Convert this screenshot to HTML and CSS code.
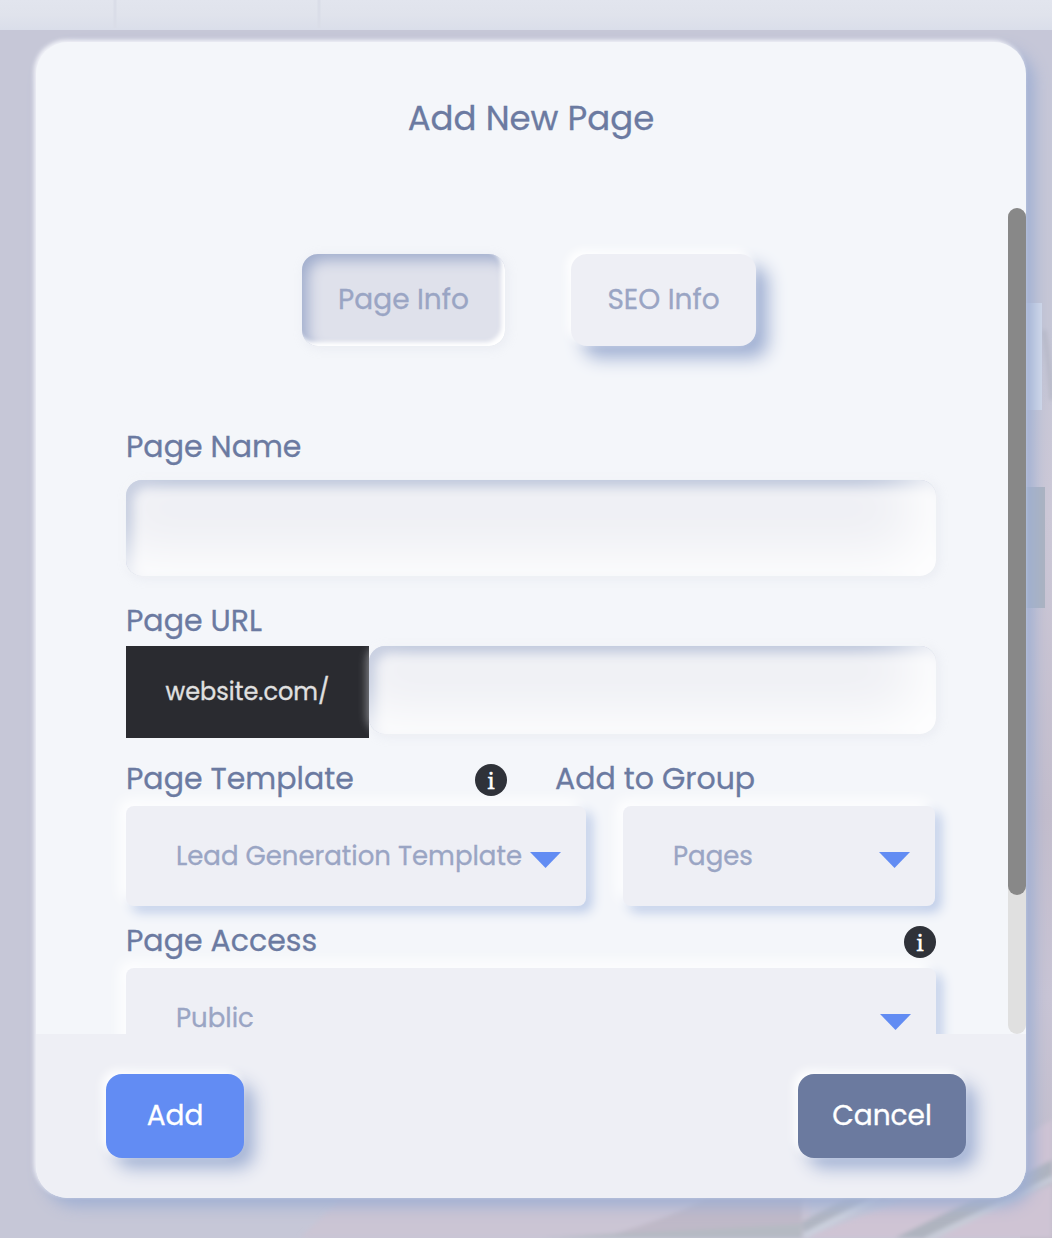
FILE: index.html
```html
<!DOCTYPE html>
<html lang="en">
<head>
    <meta charset="UTF-8">
    <meta name="viewport" content="width=device-width, initial-scale=1.0">
    <title>Add New Page</title>
    <link rel="stylesheet" href="styles.css">
</head>
<body>
    <svg class="backdrop" width="1052" height="1238" viewBox="0 0 1052 1238" aria-hidden="true">
        <defs>
            <linearGradient id="bar" x1="0" y1="0" x2="0" y2="1">
                <stop offset="0" stop-color="#e2e5ee"/>
                <stop offset="0.5" stop-color="#e0e3ec"/>
                <stop offset="1" stop-color="#dadeea"/>
            </linearGradient>
            <linearGradient id="side" x1="0" y1="0" x2="0" y2="1">
                <stop offset="0" stop-color="#c6c7d8"/>
                <stop offset="0.25" stop-color="#c6c7d6"/>
                <stop offset="0.4" stop-color="#cdc9d7"/>
                <stop offset="0.65" stop-color="#c3bdcc"/>
                <stop offset="0.8" stop-color="#c9c5d5"/>
                <stop offset="1" stop-color="#c0bbc8"/>
            </linearGradient>
            <filter id="soft" x="-20%" y="-20%" width="140%" height="140%">
                <feGaussianBlur stdDeviation="2"/>
            </filter>
        </defs>
        <rect width="1052" height="1238" fill="#c6c7d7"/>
        <rect x="1020" y="30" width="32" height="1208" fill="url(#side)"/>
        <g filter="url(#soft)">
            <path d="M300 1238 L350 1190 H810 V1238Z" fill="#cbc5d4"/>
            <path d="M600 1238 Q680 1216 720 1190 H802 V1238Z" fill="#bfb9c8"/>
            <path d="M540 1238 Q650 1232 802 1224 V1238Z" fill="#b5bac3"/>
            <path d="M804 1238 L930 1190 L1052 1120 V1238Z" fill="#cfc4d4"/>
            <path d="M802 1222 L860 1190 H900 L804 1238Z" fill="#b1b6c2"/>
            <path d="M804 1236 L880 1196" stroke="#cbd0dd" stroke-width="6"/>
            <path d="M895 1238 L1052 1160 V1184 L925 1238Z" fill="#afb4bf"/>
            <path d="M926 1240 L1054 1178" stroke="#c8ccd8" stroke-width="6"/>
            <path d="M1044 330 Q1050 370 1052 400" stroke="#b8bac8" stroke-width="5" fill="none"/>
        </g>
        <rect x="1020" y="303" width="22" height="107" fill="#d4dcec"/>
        <rect x="1020" y="487" width="25" height="121" fill="#abb3c0"/>
        <rect width="1052" height="30" fill="url(#bar)"/>
        <path d="M115 0 V28 M319 0 V28" stroke="#dadde8" stroke-width="3"/>
    </svg>

    <div class="modal">
        <div class="modal-header">
            <h1>Add New Page</h1>
        </div>

        <div class="modal-body">
            <form class="page-form">
                <div class="tabs">
                    <button type="button" class="tab tab-info active">Page Info</button>
                    <button type="button" class="tab tab-seo">SEO Info</button>
                </div>

                <div class="field">
                    <label for="page-name">Page Name</label>
                    <input type="text" id="page-name">
                </div>

                <div class="field field-url">
                    <label for="page-url">Page URL</label>
                    <div class="url-row">
                        <span class="prefix">website.com/</span>
                        <input type="text" id="page-url">
                    </div>
                </div>

                <div class="row">
                    <div class="field field-template">
                        <div class="label-row">
                            <label>Page Template</label>
                            <span class="info">i</span>
                        </div>
                        <div class="select">Lead Generation Template</div>
                    </div>
                    <div class="field field-group">
                        <label>Add to Group</label>
                        <div class="select">Pages</div>
                    </div>
                </div>

                <div class="field field-access">
                    <div class="label-row">
                        <label>Page Access</label>
                        <span class="info">i</span>
                    </div>
                    <div class="select">Public</div>
                </div>
            </form>
            <div class="scrollbar"><div class="thumb"></div></div>
        </div>

        <div class="modal-footer">
            <button type="button" class="btn btn-add">Add</button>
            <button type="button" class="btn btn-cancel">Cancel</button>
        </div>
    </div>
</body>
</html>
```

FILE: styles.css
```css
* {
    box-sizing: border-box;
}

body {
    margin: 0;
    height: 1238px;
    overflow: hidden;
    padding: 42px 26px 40px 36px;
    font-family: Poppins, Inter, sans-serif;
    color: #6b7aa1;
    -webkit-text-stroke: 0.3px currentColor;
}

.backdrop {
    position: absolute;
    top: 0;
    left: 0;
    z-index: -1;
}

.modal {
    display: flex;
    flex-direction: column;
    height: 1156px;
    border-radius: 32px;
    background-color: #f4f6fa;
    box-shadow: -2px -2px 4px #f4f5fa, 8px 8px 16px #9fafd3;
}

.modal-header {
    height: 166px;
    padding-top: 46px;
}

h1 {
    margin: 0;
    font-size: 34px;
    font-weight: 400;
    line-height: 60px;
    text-align: center;
}

.modal-body {
    display: flex;
    height: 826px;
    overflow: hidden;
}

.page-form {
    width: 972px;
    padding: 46px 72px 0 90px;
}

.scrollbar {
    width: 18px;
    border-radius: 9px;
    background-color: #e0e0e0;
}

.thumb {
    height: 687px;
    border-radius: 9px;
    background-color: #888;
}

.tabs {
    display: flex;
    gap: 66px;
    margin: 0 0 78px 176px;
}

.tab {
    height: 92px;
    padding: 0;
    border: none;
    border-radius: 16px;
    background-color: #eeeff5;
    color: #9aa5c4;
    font: inherit;
    font-size: 28px;
    box-shadow: -4px -4px 10px #fff, 12px 12px 18px #a0b0d3;
}

.tab-info {
    width: 203px;
}

.tab-seo {
    width: 185px;
}

.tab.active {
    background-color: #dfe1eb;
    box-shadow: inset -4px -4px 4px #fff, inset 6px 6px 14px #a0adcd, 2px 2px 12px rgba(190, 195, 210, 0.2);
}

label {
    display: block;
    font-size: 30px;
    line-height: 46px;
    white-space: nowrap;
}

input {
    display: block;
    width: 100%;
    height: 96px;
    margin-top: 10px;
    border: none;
    border-radius: 16px;
    background-color: #eeeff4;
    box-shadow: inset -20px -20px 60px #fff, inset 6px 6px 12px #a9b4d0, 2px 2px 12px rgba(190, 195, 210, 0.2), -2px -2px 10px rgba(255, 255, 255, 0.4);
}

.field-url {
    margin-top: 22px;
}

.url-row {
    display: flex;
    height: 92px;
    margin-top: 2px;
}

.url-row input {
    flex: 1;
    height: 88px;
    margin: 0;
}

.prefix {
    width: 243px;
    background-color: #2a2b30;
    color: #e0e0e0;
    font-size: 24px;
    line-height: 92px;
    text-align: center;
}

.row {
    display: flex;
    gap: 37px;
    margin-top: 18px;
}

.field-template {
    width: 460px;
}

.field-group {
    width: 312px;
}

.field-group label {
    margin-left: -68px;
}

.label-row {
    display: flex;
    align-items: center;
    justify-content: space-between;
}

.field-template .label-row {
    width: 381px;
}

.field-access {
    margin-top: 12px;
}

.info {
    width: 32px;
    height: 32px;
    margin-top: 2px;
    border-radius: 50%;
    background-color: #2f3239;
    color: #fff;
    font: 22px/33px "Noto Serif", "DejaVu Serif", serif;
    text-align: center;
    -webkit-text-stroke-width: 0.5px;
}

.select {
    display: flex;
    align-items: center;
    justify-content: space-between;
    height: 100px;
    margin-top: 4px;
    padding: 0 25px 0 50px;
    border-radius: 8px;
    background-color: #eeeff5;
    color: #9aa5c4;
    font-size: 26px;
    white-space: nowrap;
    box-shadow: -6px -6px 14px #fff, 6px 6px 12px #bccbe8;
}

.select::after {
    content: "";
    width: 31px;
    height: 16px;
    margin-top: 8px;
    background-color: #628cf3;
    clip-path: polygon(0 0, 100% 0, 50% 100%);
}

.modal-footer {
    display: flex;
    justify-content: space-between;
    height: 164px;
    padding: 40px 60px 0 70px;
    border-radius: 0 0 32px 32px;
    background-color: #eeeff5;
}

.btn {
    height: 84px;
    padding: 0;
    border: none;
    border-radius: 16px;
    color: #fff;
    font: inherit;
    font-size: 28px;
    box-shadow: -4px -4px 10px #fff, 10px 10px 18px #a0b0d3;
}

.btn-add {
    width: 138px;
    background-color: #628cf3;
}

.btn-cancel {
    width: 168px;
    background-color: #6b7a9f;
}
```
